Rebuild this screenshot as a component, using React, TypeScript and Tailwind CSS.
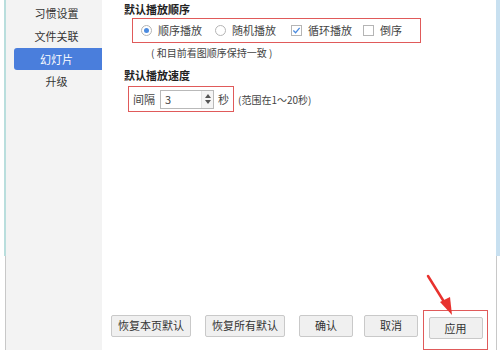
import React from 'react';

const font = { fontFamily: '"Microsoft YaHei", "Noto Sans CJK SC", sans-serif' };

const Radio = ({ checked }: { checked?: boolean }) => (
  <span className="w-[11px] h-[11px] rounded-full border border-[#b5b5b5] bg-white flex items-center justify-center">
    {checked && <span className="w-[5px] h-[5px] rounded-full bg-[#4b8be0]" />}
  </span>
);

const Check = ({ checked }: { checked?: boolean }) => (
  <span className="w-[11px] h-[11px] border border-[#b5b5b5] bg-white flex items-center justify-center">
    {checked && (
      <svg viewBox="0 0 10 10" className="w-[9px] h-[9px]">
        <path d="M1.5 5 L4 7.5 L8.5 2" fill="none" stroke="#4b8be0" strokeWidth="1.4" />
      </svg>
    )}
  </span>
);

const Btn = ({ label, w }: { label: string; w: string }) => (
  <div className={`${w} h-[22px] border border-[#c9c9c9] bg-[#f0f0f0] rounded-[2px] flex items-center justify-center text-[11px] text-[#333]`}>
    {label}
  </div>
);

export default function App() {
  const items = ['习惯设置', '文件关联', '幻灯片', '升级'];
  return (
    <div className="w-[500px] h-[350px] bg-white flex relative overflow-hidden text-[#333]" style={font}>
      {/* left edge */}
      <div className="w-[6px] flex flex-col">
        <div className="h-[256px] bg-white border-r-2 border-[#b9dedd]" />
        <div className="flex-1 bg-white border-r border-[#c8c8c8]" />
      </div>

      {/* sidebar */}
      <div className="w-[98px] bg-[#f3f3f3] flex flex-col pl-[8px] pt-[2px]">
        {items.map((t) => (
          <div
            key={t}
            className={
              t === '幻灯片'
                ? 'h-[22px] flex items-center justify-center text-[11px] pr-[3px] bg-[#4a7edc] text-white rounded-l-[3px]'
                : 'h-[23px] flex items-center justify-center text-[11px] pr-[3px] text-[#333]'
            }
          >
            {t}
          </div>
        ))}
      </div>

      {/* main */}
      <div className="flex-1 flex flex-col pl-[22px] pr-[8px]">
        <div className="text-[11px] font-bold text-[#222] mt-[2px] leading-[14px]">默认播放顺序</div>
        <div className="ml-[8px] mt-[2px] w-[289px] h-[25px] border border-[#e05a5a] flex items-center pl-[8px] text-[11px] text-[#444]">
          <div className="flex items-center gap-[6px] w-[74px]">
            <Radio checked />
            <span>顺序播放</span>
          </div>
          <div className="flex items-center gap-[6px] w-[76px]">
            <Radio />
            <span>随机播放</span>
          </div>
          <div className="flex items-center gap-[6px] w-[72px]">
            <Check checked />
            <span>循环播放</span>
          </div>
          <div className="flex items-center gap-[6px]">
            <Check />
            <span>倒序</span>
          </div>
        </div>
        <div className="ml-[27px] mt-[3px] text-[10px] text-[#444] leading-[14px]">( 和目前看图顺序保持一致 )</div>
        <div className="text-[11px] font-bold text-[#222] mt-[8px] leading-[14px]">默认播放速度</div>
        <div className="flex items-center mt-[4px]">
          <div className="ml-[4px] w-[106px] h-[26px] border border-[#e05a5a] flex items-center pl-[4px] text-[11px] text-[#444]">
            <span>间隔</span>
            <div className="ml-[5px] w-[54px] h-[19px] border border-[#b9b9b9] bg-white flex items-center">
              <span className="flex-1 pl-[4px]">3</span>
              <div className="w-[12px] h-full flex flex-col items-center justify-center gap-[2px] border-l border-[#e4e4e4] bg-[#f5f5f5]">
                <svg viewBox="0 0 6 4" className="w-[6px] h-[4px]"><path d="M0 4 L3 0 L6 4 Z" fill="#555" /></svg>
                <svg viewBox="0 0 6 4" className="w-[6px] h-[4px]"><path d="M0 0 L3 4 L6 0 Z" fill="#555" /></svg>
              </div>
            </div>
            <span className="ml-[4px]">秒</span>
          </div>
          <span className="ml-[4px] text-[10px] text-[#444]">(范围在1～20秒)</span>
        </div>

        <div className="flex-1" />
        <div className="flex items-center mb-[9px] -ml-[13px]">
          <Btn label="恢复本页默认" w="w-[80px]" />
          <div className="ml-[14px]"><Btn label="恢复所有默认" w="w-[80px]" /></div>
          <div className="ml-[14px]"><Btn label="确认" w="w-[54px]" /></div>
          <div className="ml-[11px]"><Btn label="取消" w="w-[54px]" /></div>
          <div className="ml-[5px] w-[65px] h-[40px] border border-[#e05a5a] mb-[-9px] flex items-start justify-center pt-[6px]">
            <Btn label="应用" w="w-[54px]" />
          </div>
        </div>
      </div>

      {/* right edge */}
      <div className="w-[4px] flex flex-col">
        <div className="h-[256px] bg-[#c8e0f0]" />
        <div className="flex-1 bg-white border-l border-[#c8c8c8]" />
      </div>

      {/* red arrow */}
      <svg className="absolute left-0 top-0 pointer-events-none" width="500" height="350">
        <path d="M428 276 L446 305" stroke="#e8322e" strokeWidth="2.5" fill="none" strokeLinecap="round" />
        <path d="M440 302 L452 315 L450 297 Z" fill="#e8322e" />
      </svg>
    </div>
  );
}
